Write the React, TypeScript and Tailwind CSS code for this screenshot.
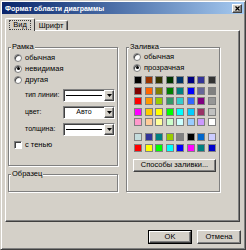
const raised =
  'border border-t-white border-l-white border-r-[#404040] border-b-[#404040] shadow-[inset_-1px_-1px_#808080]';
const sunken =
  'border border-t-[#808080] border-l-[#808080] border-r-white border-b-white shadow-[inset_1px_1px_#404040]';

const colors = [
  ['#000000', '#993300', '#333300', '#003300', '#003366', '#000080', '#333399', '#333333'],
  ['#800000', '#ff6600', '#808000', '#008000', '#008080', '#0000ff', '#666699', '#808080'],
  ['#ff0000', '#ff9900', '#99cc00', '#339966', '#33cccc', '#3366ff', '#800080', '#969696'],
  ['#ff00ff', '#ffcc00', '#ffff00', '#00ff00', '#00ffff', '#00ccff', '#993366', '#c0c0c0'],
  ['#ff99cc', '#ffcc99', '#ffff99', '#ccffcc', '#ccffff', '#99ccff', '#cc99ff', '#ffffff'],
];

const extra = [
  ['#c4dcdc', '#333399', '#008080', '#99cc00', '#808080', '#000000', '#0066cc', '#ccccff'],
  ['#ff0000', '#ffff00', '#00ff00', '#00ffff', '#0000ff', '#ff00ff', '#008080', '#0000cc'],
];

function Group({ label, className, children }: { label: string; className: string; children?: React.ReactNode }) {
  return (
    <div className={`relative border border-[#808080] shadow-[inset_1px_1px_white,1px_1px_white] ${className}`}>
      <span className="absolute -top-[6px] left-[2px] bg-[#d4d0c8] px-[1px] leading-[10px]">{label}</span>
      {children}
    </div>
  );
}

function Radio({ label, checked }: { label: string; checked?: boolean }) {
  return (
    <div className="flex h-[11px] items-center gap-[3px]">
      <div className="flex h-[8px] w-[8px] items-center justify-center rounded-full border border-[#808080] bg-white shadow-[inset_1px_1px_#404040]">
        {checked && <div className="h-[3px] w-[3px] rounded-full bg-black" />}
      </div>
      <span>{label}</span>
    </div>
  );
}

function Arrow() {
  return (
    <svg width="5" height="3" viewBox="0 0 5 3">
      <path d="M0 0h5L2.5 3z" fill="black" />
    </svg>
  );
}

function Combo({ children }: { children?: React.ReactNode }) {
  return (
    <div className={`flex h-[13px] w-[52px] shrink-0 items-center bg-white ${sunken}`}>
      <div className="flex flex-1 items-center justify-center">{children}</div>
      <div className={`flex h-[11px] w-[10px] items-center justify-center bg-[#d4d0c8] ${raised}`}>
        <Arrow />
      </div>
    </div>
  );
}

function Swatch({ c }: { c: string }) {
  return (
    <div className="flex h-[10.5px] w-[10.5px] items-center justify-center">
      <div className="h-[8px] w-[8px] border border-[#808080]" style={{ background: c }} />
    </div>
  );
}

export default function App() {
  return (
    <div
      className={`flex h-[250px] w-[246px] flex-col bg-[#d4d0c8] p-[1px] font-['Liberation_Sans',sans-serif] text-[7.5px] text-black border border-t-[#d4d0c8] border-l-[#d4d0c8] border-r-[#404040] border-b-[#404040] shadow-[inset_1px_1px_white,inset_-1px_-1px_#808080]`}
    >
      {/* title bar */}
      <div className="flex h-[12px] items-center justify-between bg-gradient-to-r from-[#0a246a] to-[#a6caf0] pl-[3px] pr-[2px]">
        <span className="text-[7px] leading-none font-bold text-white">Формат области диаграммы</span>
        <div className={`flex h-[9px] w-[10px] items-center justify-center bg-[#d4d0c8] ${raised}`}>
          <svg width="5" height="5" viewBox="0 0 5 5">
            <path d="M0.5 0.5l4 4M4.5 0.5l-4 4" stroke="black" strokeWidth="1.2" />
          </svg>
        </div>
      </div>

      {/* tabs */}
      <div className="mt-[4px] ml-[3px] flex h-[12px] items-end">
        <div className="relative z-10 -mb-[1px] flex h-[13px] w-[30px] items-center justify-center rounded-t-[2px] border-t border-r border-l border-t-white border-r-[#404040] border-l-white bg-[#d4d0c8]">
          <span className="border border-dotted border-[#404040] px-[3px] leading-[8px]">Вид</span>
        </div>
        <div className="flex h-[10px] w-[33px] items-center justify-center rounded-t-[2px] border-t border-r border-t-white border-r-[#404040] shadow-[inset_-1px_0_#808080]">
          Шрифт
        </div>
      </div>

      {/* panel */}
      <div className={`mx-[3px] flex h-[192px] w-[235px] gap-[8px] pt-[16px] pl-[2px] ${raised}`}>
        <div className="flex w-[110px] flex-col gap-[8px]">
          <Group label="Рамка" className="flex h-[119px] flex-col pt-[4px] pl-[5px]">
            <Radio label="обычная" />
            <Radio label="невидимая" checked />
            <Radio label="другая" />
            <div className="mt-[4px] flex flex-col gap-[4px] pl-[11px] text-[7px] whitespace-nowrap">
              <div className="flex items-center justify-between pr-[2px]">
                <span>тип линии:</span>
                <Combo>
                  <div className="h-[1px] w-[36px] bg-black" />
                </Combo>
              </div>
              <div className="flex items-center justify-between pr-[2px]">
                <span>цвет:</span>
                <Combo>Авто</Combo>
              </div>
              <div className="flex items-center justify-between pr-[2px]">
                <span>толщина:</span>
                <Combo>
                  <div className="h-[1px] w-[36px] bg-black" />
                </Combo>
              </div>
            </div>
            <div className="mt-[3px] flex items-center gap-[3px]">
              <div className={`h-[8px] w-[8px] bg-white ${sunken}`} />
              <span>с тенью</span>
            </div>
          </Group>
          <Group label="Образец" className="h-[18px]" />
        </div>

        <Group label="Заливка" className="flex h-[145px] w-[94px] flex-col pt-[3px] pl-[6px]">
          <Radio label="обычная" />
          <Radio label="прозрачная" checked />
          <div className="mt-[2px] grid w-[84px] grid-cols-8">
            {colors.flat().map((c, i) => (
              <Swatch key={i} c={c} />
            ))}
          </div>
          <div className="mt-[4px] grid w-[84px] grid-cols-8 gap-y-[1px]">
            {extra.flat().map((c, i) => (
              <Swatch key={i} c={c} />
            ))}
          </div>
          <div className={`mt-[5px] flex h-[13px] w-[83px] items-center justify-center bg-[#d4d0c8] ${raised}`}>
            Способы заливки...
          </div>
        </Group>
      </div>

      {/* buttons */}
      <div className="mt-[8px] mr-[3px] flex justify-end gap-[5px]">
        <div className="border border-black">
          <div className={`flex h-[12px] w-[42px] items-center justify-center ${raised}`}>OK</div>
        </div>
        <div className={`flex h-[14px] w-[44px] items-center justify-center ${raised}`}>Отмена</div>
      </div>
    </div>
  );
}
